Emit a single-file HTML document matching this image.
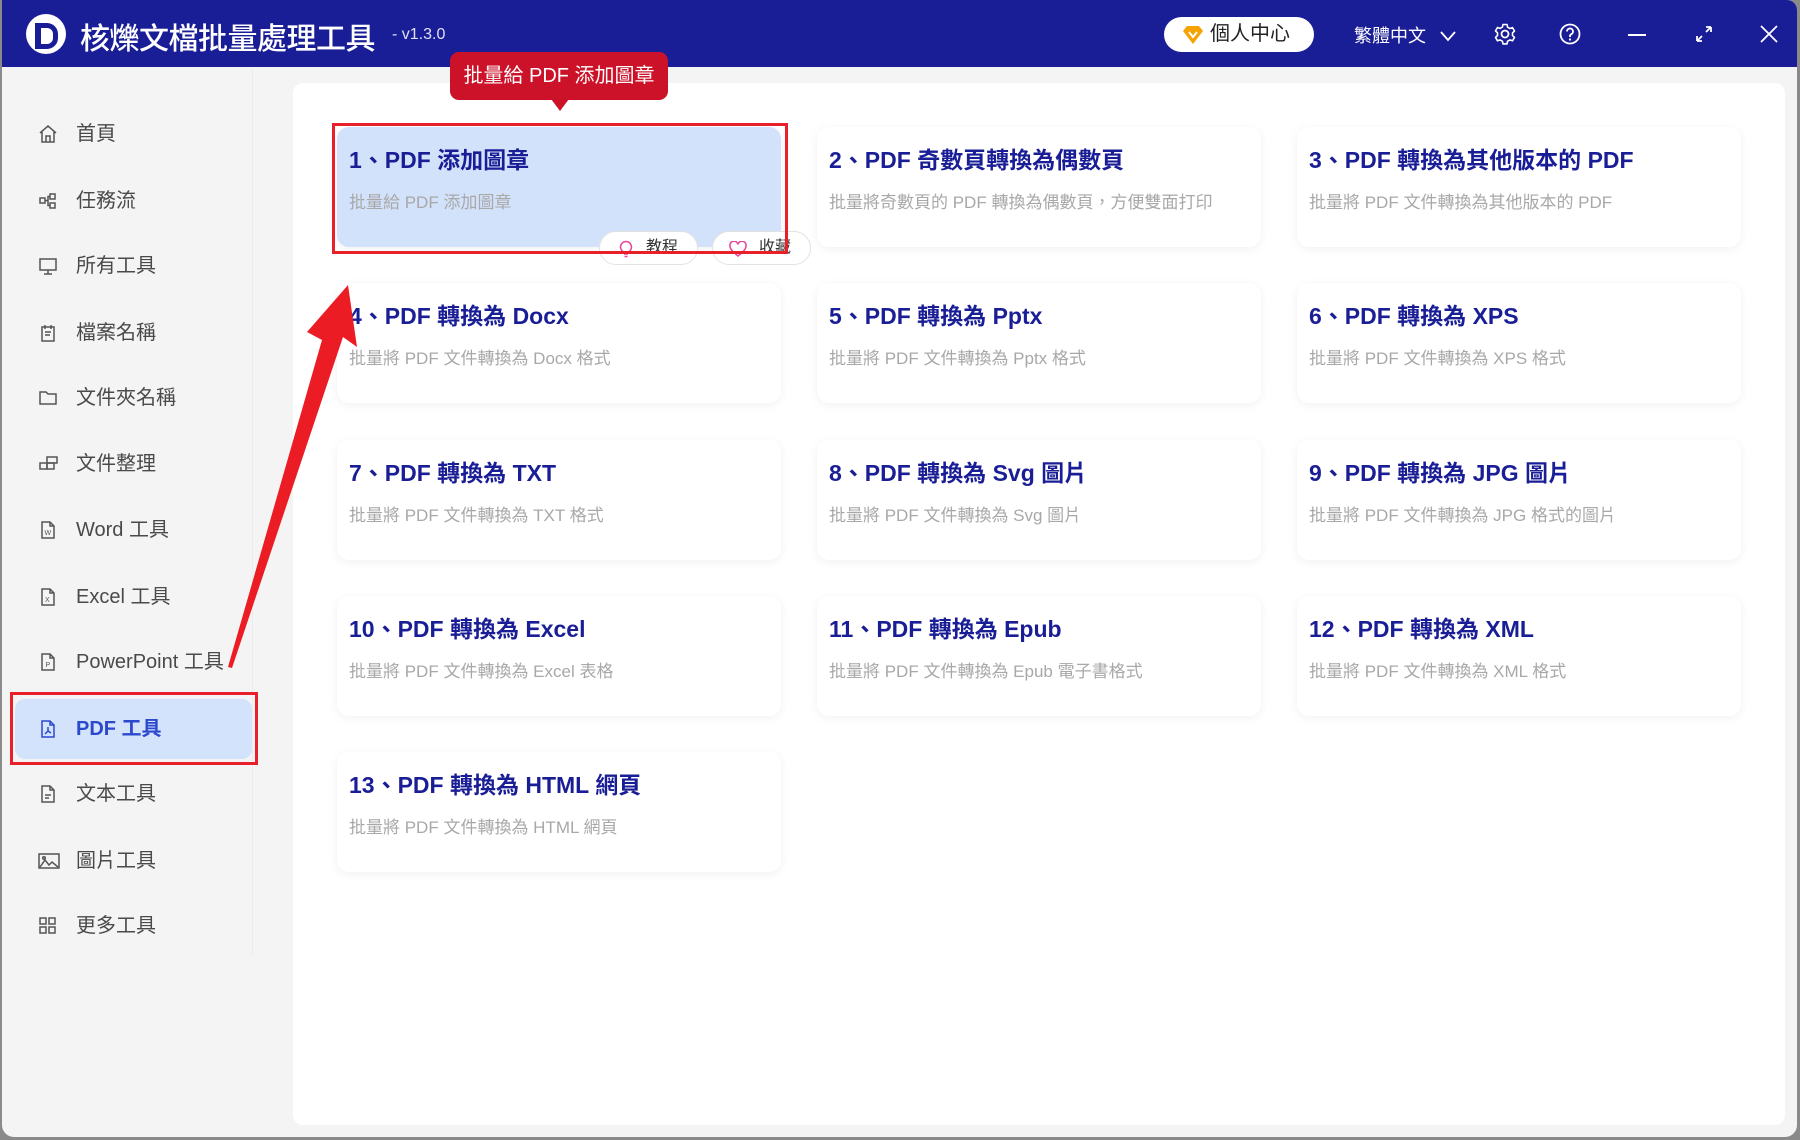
<!DOCTYPE html>
<html><head><meta charset="utf-8">
<style>
*{margin:0;padding:0;box-sizing:border-box}
body{width:1800px;height:1140px;background:#8a8a8a;font-family:"Liberation Sans","Noto Sans CJK TC",sans-serif;position:relative;overflow:hidden}
.win{position:absolute;left:2px;top:0;width:1795px;height:1137px;background:#f4f4f4;border-radius:0 10px 12px 12px;overflow:hidden}
.top{position:absolute;left:0;top:0;width:100%;height:67px;background:#1a1e96}
.logo{position:absolute;left:24px;top:14px;width:40px;height:40px;border-radius:50%;background:#fff}
.logo:after{content:"";position:absolute;left:9px;top:9px;width:12px;height:16px;border:5px solid #1a1e96;border-left-width:6px;border-radius:0 11px 11px 0}
.title{position:absolute;left:78px;top:14px;color:#fff;font-size:30px;font-weight:500;letter-spacing:-.5px}
.ver{position:absolute;left:390px;top:26px;color:#dfe0f3;font-size:16px}
.pill{position:absolute;left:1162px;top:17px;width:150px;height:35px;background:#fff;border-radius:18px;font-size:20px;color:#222;line-height:35px;padding-left:46px}
.lang{position:absolute;left:1352px;top:22px;color:#fff;font-size:18px}
.side{position:absolute;left:0;top:67px;width:251px;height:890px;border-right:1px solid #ececec}
.item{position:absolute;left:36px;height:30px;font-size:20px;color:#4a4a4a;line-height:30px}
.item svg{position:absolute;left:0;top:5px}
.item span{position:absolute;left:38px;white-space:nowrap}
.panel{position:absolute;left:291px;top:83px;width:1492px;height:1042px;background:#fff;border-radius:10px}
.card{position:absolute;width:444px;height:120px;background:#fff;border-radius:12px;box-shadow:0 2px 10px rgba(0,0,0,.06)}
.card h3{position:absolute;left:12px;top:14px;font-size:23px;color:#1a1e96;font-weight:bold;white-space:nowrap}
.card p{position:absolute;left:12px;top:61px;font-size:17px;color:#a8a8a8;white-space:nowrap}
.btn{position:absolute;top:231px;width:99px;height:34px;border:1px solid #e2e2e2;border-radius:17px;background:#fff;font-size:16px;color:#333;line-height:32px;padding-left:46px}
</style></head><body>
<div class="win">
<div class="top">
 <div class="logo"></div>
 <div class="title">核爍文檔批量處理工具</div>
 <div class="ver">- v1.3.0</div>
 <div class="pill"><svg style="position:absolute;left:18px;top:8px" width="22" height="20" viewBox="0 0 22 20"><path d="M1 6 L5 1 H17 L21 6 L11 19Z" fill="#f5a300"/><path d="M7 7 L11 12 L15 7" stroke="#fff" stroke-width="2" fill="none"/></svg>個人中心</div>
 <div class="lang">繁體中文 <svg width="18" height="12" viewBox="0 0 18 12" style="margin-left:8px"><path d="M2 2 L9 10 L16 2" stroke="#fff" stroke-width="1.8" fill="none"/></svg></div>
 <svg style="position:absolute;left:1492px;top:23px" width="22" height="22" viewBox="0 0 22 22"><circle cx="11" cy="11" r="3.5" stroke="#fff" stroke-width="1.8" fill="none"/><path d="M9 1.5h4l.6 2.7 2.3 1.3 2.6-.9 2 3.4-2 1.9v2.6l2 1.9-2 3.4-2.6-.9-2.3 1.3-.6 2.7h-4l-.6-2.7-2.3-1.3-2.6.9-2-3.4 2-1.9V9.8l-2-1.9 2-3.4 2.6.9 2.3-1.3z" stroke="#fff" stroke-width="1.6" fill="none" stroke-linejoin="round"/></svg>
 <svg style="position:absolute;left:1557px;top:23px" width="22" height="22" viewBox="0 0 22 22"><circle cx="11" cy="11" r="9.5" stroke="#fff" stroke-width="1.8" fill="none"/><path d="M8 8.5a3 3 0 1 1 4.2 2.7c-.8.4-1.2 1-1.2 1.8v1" stroke="#fff" stroke-width="1.8" fill="none"/><circle cx="11" cy="16.5" r="1.1" fill="#fff"/></svg>
 <div style="position:absolute;left:1626px;top:34px;width:18px;height:2px;background:#fff"></div>
 <svg style="position:absolute;left:1693px;top:25px" width="18" height="18" viewBox="0 0 18 18"><path d="M2 16 L7 11 M2 16 V11 M2 16 H7 M16 2 L11 7 M16 2 V7 M16 2 H11" stroke="#fff" stroke-width="1.8" fill="none"/></svg>
 <svg style="position:absolute;left:1758px;top:25px" width="18" height="18" viewBox="0 0 18 18"><path d="M1 1 L17 17 M17 1 L1 17" stroke="#fff" stroke-width="1.8"/></svg>
</div>

<div class="side">
 <div class="item" style="top:52px"><svg width="20" height="20" viewBox="0 0 20 20" fill="none" stroke="#555" stroke-width="1.5"><path d="M2 9 L10 2 L18 9 M4 8 V18 H16 V8 M8 18 V12 H12 V18"/></svg><span>首頁</span></div>
 <div class="item" style="top:119px"><svg width="20" height="20" viewBox="0 0 20 20" fill="none" stroke="#555" stroke-width="1.5"><rect x="2" y="7" width="5" height="5"/><rect x="12" y="3" width="5" height="5"/><rect x="12" y="12" width="5" height="5"/><path d="M7 9.5 H10 V5.5 H12 M10 9.5 V14.5 H12"/></svg><span>任務流</span></div>
 <div class="item" style="top:184px"><svg width="20" height="20" viewBox="0 0 20 20" fill="none" stroke="#555" stroke-width="1.5"><rect x="2" y="3" width="16" height="11"/><path d="M10 14 V18 M6 18 H14"/></svg><span>所有工具</span></div>
 <div class="item" style="top:251px"><svg width="20" height="20" viewBox="0 0 20 20" fill="none" stroke="#555" stroke-width="1.5"><path d="M4 4 H16 V18 H4 Z M7 2 V6 M13 2 V6 M7 9 H13 M7 12 H12"/></svg><span>檔案名稱</span></div>
 <div class="item" style="top:316px"><svg width="20" height="20" viewBox="0 0 20 20" fill="none" stroke="#555" stroke-width="1.5"><path d="M2 4 H8 L10 6 H18 V16 H2 Z"/></svg><span>文件夾名稱</span></div>
 <div class="item" style="top:382px"><svg width="22" height="20" viewBox="0 0 22 20" fill="none" stroke="#555" stroke-width="1.5"><rect x="2" y="9" width="7" height="6"/><rect x="9" y="9" width="7" height="6"/><rect x="9" y="3" width="10" height="6"/></svg><span>文件整理</span></div>
 <div class="item" style="top:448px"><svg width="20" height="20" viewBox="0 0 20 20" fill="none" stroke="#555" stroke-width="1.5"><path d="M4 2 H12 L16 6 V18 H4 Z M12 2 V6 H16"/><text x="6.5" y="15" font-size="7" fill="#555" stroke="none">W</text></svg><span>Word 工具</span></div>
 <div class="item" style="top:515px"><svg width="20" height="20" viewBox="0 0 20 20" fill="none" stroke="#555" stroke-width="1.5"><path d="M4 2 H12 L16 6 V18 H4 Z M12 2 V6 H16"/><text x="7" y="15" font-size="7" fill="#555" stroke="none">X</text></svg><span>Excel 工具</span></div>
 <div class="item" style="top:580px"><svg width="20" height="20" viewBox="0 0 20 20" fill="none" stroke="#555" stroke-width="1.5"><path d="M4 2 H12 L16 6 V18 H4 Z M12 2 V6 H16"/><text x="7.5" y="15" font-size="7" fill="#555" stroke="none">P</text></svg><span>PowerPoint 工具</span></div>
 <div style="position:absolute;left:13px;top:632px;width:237px;height:60px;background:#d3e3fb;border-radius:10px"></div>
 <div style="position:absolute;left:8px;top:625px;width:248px;height:73px;border:3px solid #e8202a"></div>
 <div class="item" style="top:647px;color:#2c48cc;font-weight:bold"><svg width="20" height="20" viewBox="0 0 20 20" fill="none" stroke="#2c48cc" stroke-width="1.5"><path d="M4 2 H12 L16 6 V18 H4 Z M12 2 V6 H16 M10 8 V12 L7 15 M10 12 L13 14"/></svg><span>PDF 工具</span></div>
 <div class="item" style="top:712px"><svg width="20" height="20" viewBox="0 0 20 20" fill="none" stroke="#555" stroke-width="1.5"><path d="M4 2 H12 L16 6 V18 H4 Z M12 2 V6 H16 M7 11 H13 M7 14 H11"/></svg><span>文本工具</span></div>
 <div class="item" style="top:779px"><svg width="22" height="20" viewBox="0 0 22 20" fill="none" stroke="#555" stroke-width="1.5"><rect x="1" y="3" width="20" height="14"/><path d="M2 16 L7 9 L11 14 L14 11 L20 16"/><circle cx="6" cy="7" r="1.3"/></svg><span>圖片工具</span></div>
 <div class="item" style="top:844px"><svg width="20" height="20" viewBox="0 0 20 20" fill="none" stroke="#555" stroke-width="1.5"><rect x="2" y="2" width="6" height="6"/><rect x="11" y="2" width="6" height="6"/><rect x="2" y="11" width="6" height="6"/><rect x="11" y="11" width="6" height="6"/></svg><span>更多工具</span></div>
</div>

<div class="panel"></div>
</div>

<div class="card" style="left:337px;top:127px;background:#d3e2fb"><h3>1、PDF 添加圖章</h3><p>批量給 PDF 添加圖章</p></div>
<div class="card" style="left:817px;top:127px"><h3>2、PDF 奇數頁轉換為偶數頁</h3><p>批量將奇數頁的 PDF 轉換為偶數頁，方便雙面打印</p></div>
<div class="card" style="left:1297px;top:127px"><h3>3、PDF 轉換為其他版本的 PDF</h3><p>批量將 PDF 文件轉換為其他版本的 PDF</p></div>
<div class="card" style="left:337px;top:283px"><h3>4、PDF 轉換為 Docx</h3><p>批量將 PDF 文件轉換為 Docx 格式</p></div>
<div class="card" style="left:817px;top:283px"><h3>5、PDF 轉換為 Pptx</h3><p>批量將 PDF 文件轉換為 Pptx 格式</p></div>
<div class="card" style="left:1297px;top:283px"><h3>6、PDF 轉換為 XPS</h3><p>批量將 PDF 文件轉換為 XPS 格式</p></div>
<div class="card" style="left:337px;top:440px"><h3>7、PDF 轉換為 TXT</h3><p>批量將 PDF 文件轉換為 TXT 格式</p></div>
<div class="card" style="left:817px;top:440px"><h3>8、PDF 轉換為 Svg 圖片</h3><p>批量將 PDF 文件轉換為 Svg 圖片</p></div>
<div class="card" style="left:1297px;top:440px"><h3>9、PDF 轉換為 JPG 圖片</h3><p>批量將 PDF 文件轉換為 JPG 格式的圖片</p></div>
<div class="card" style="left:337px;top:596px"><h3>10、PDF 轉換為 Excel</h3><p>批量將 PDF 文件轉換為 Excel 表格</p></div>
<div class="card" style="left:817px;top:596px"><h3>11、PDF 轉換為 Epub</h3><p>批量將 PDF 文件轉換為 Epub 電子書格式</p></div>
<div class="card" style="left:1297px;top:596px"><h3>12、PDF 轉換為 XML</h3><p>批量將 PDF 文件轉換為 XML 格式</p></div>
<div class="card" style="left:337px;top:752px"><h3>13、PDF 轉換為 HTML 網頁</h3><p>批量將 PDF 文件轉換為 HTML 網頁</p></div>

<div class="btn" style="left:599px"><svg style="position:absolute;left:19px;top:8px" width="14" height="18" viewBox="0 0 14 18"><circle cx="7" cy="7" r="5.5" stroke="#e8449a" stroke-width="1.5" fill="none"/><path d="M5 14 H9 M5.5 16.5 H8.5" stroke="#e8449a" stroke-width="1.5"/></svg>教程</div>
<div class="btn" style="left:712px"><svg style="position:absolute;left:16px;top:9px" width="18" height="16" viewBox="0 0 18 16"><path d="M9 15 C3 10 1 8 1 5 A4 4 0 0 1 9 3.5 A4 4 0 0 1 17 5 C17 8 15 10 9 15Z" stroke="#e8449a" stroke-width="1.5" fill="none"/></svg>收藏</div>

<div style="position:absolute;left:332px;top:123px;width:456px;height:131px;border:3.5px solid #e8202a"></div>

<div style="position:absolute;left:450px;top:52px;width:218px;height:48px;background:#cc1228;border-radius:9px;color:#fff;font-size:20px;line-height:48px;text-align:center">批量給 PDF 添加圖章</div>
<div style="position:absolute;left:551px;top:99px;width:0;height:0;border-left:9px solid transparent;border-right:9px solid transparent;border-top:12px solid #cc1228"></div>

<svg style="position:absolute;left:0;top:0" width="1800" height="1140"><polygon points="348,285 357,347 343,337 232,668 228,667 322,340 307,332" fill="#ec1c24"/></svg>
</body></html>
